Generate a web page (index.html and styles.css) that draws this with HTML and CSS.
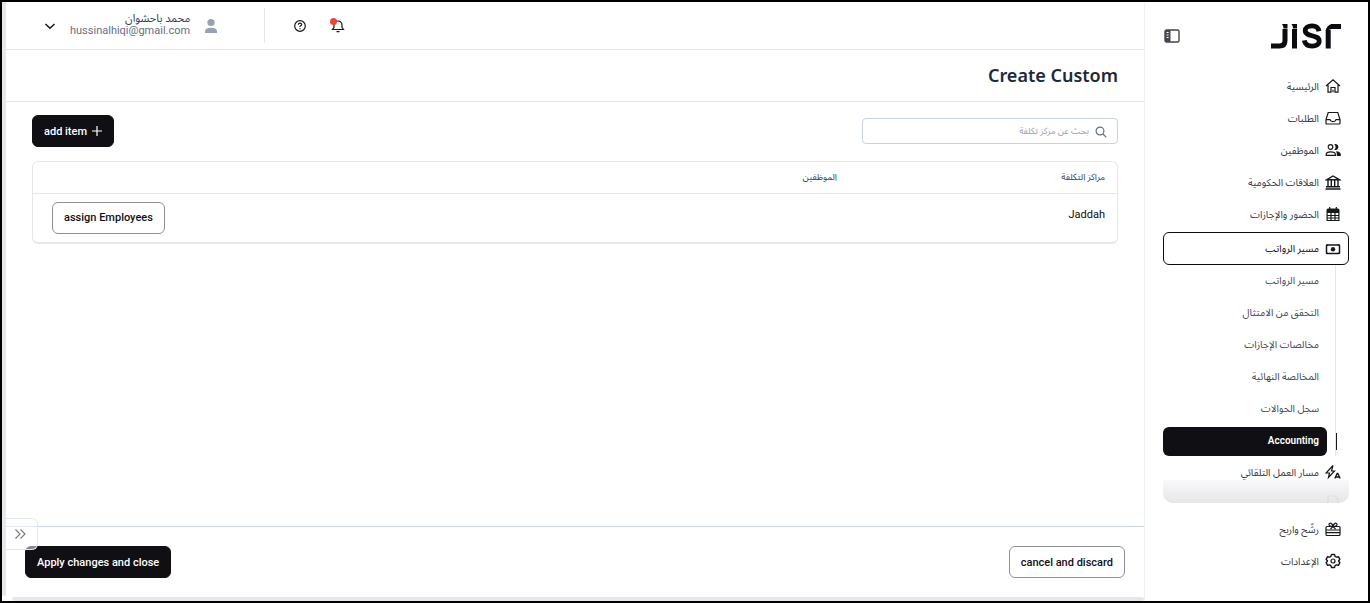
FILE: index.html
```html
<!DOCTYPE html>
<html lang="ar" dir="rtl">
<head>
<meta charset="utf-8">
<meta name="viewport" content="width=device-width, initial-scale=1">
<title>Create Custom</title>
<link rel="stylesheet" href="styles.css">
</head>
<body>
<div class="app">
  <aside class="sidebar">
    <div class="brand">
      <svg class="logo" viewBox="0 0 70 26" role="img" aria-label="Jisr" fill="none" stroke="#0b0b10" stroke-width="5">
        <path d="M0 23h8.500q5.500 0 5.500-5.500V6"/>
        <path d="M11 1h5.500v4.500h-4q0-3-1.500-4.500z M20.500 1h5.500v4.500h-4q0-3-1.500-4.500z" fill="#0b0b10" stroke="none"/>
        <path d="M23.500 6v19.500"/>
        <path d="M48 8.200C47.300 4.500 44.500 2.800 41 2.800c-4.200 0-6.800 1.900-6.800 4.800 0 7 14 3.200 14 10.500 0 3.300-2.900 5-7 5-4.500 0-7.200-1.900-7.900-5.700" stroke-width="4.800"/>
        <path d="M57.200 25.500V7M60 3.500h10"/>
        <path d="M60.500 1v5l-5.800 2q.8-5.500 5.800-7z" fill="#0b0b10" stroke="none"/>
      </svg>
      <button class="icon-button" type="button" aria-label="طي القائمة">
        <svg class="icon-panel" viewBox="0 0 16 14"><rect x="1" y="1" width="14" height="12" rx="1.500" fill="none" stroke="#44474f" stroke-width="1.400"/><path d="M1 1h5.500v12H1z" fill="#44474f"/><path d="M2.600 3.500h2M2.600 6h2M2.600 8.500h2" stroke="#fff"/></svg>
      </button>
    </div>
    <nav class="nav" aria-label="القائمة الرئيسية">
      <a class="nav-item" href="#"><svg class="icon" viewBox="0 0 16 16"><path d="M1 8l7-6.300L15 8M3 6.500v7.700h3V9.500h4v4.700h3V6.500M8 14.200v-2.500"/></svg>الرئيسية</a>
      <a class="nav-item" href="#"><svg class="icon" viewBox="0 0 16 16"><path d="M3.200 2.500h9.600l2.200 7V13q0 1-1 1H2q-1 0-1-1V9.500zM1 9.700h4q.5 2 3 2t3-2h4"/></svg>الطلبات</a>
      <a class="nav-item" href="#"><svg class="icon" viewBox="0 0 16 16"><circle cx="5.500" cy="5" r="2.300"/><path d="M1.200 13.300v-.8q0-2.600 4.600-2.600t4.600 2.600v.8z"/><path class="solid" d="M9.300 2.200a3 3 0 110 5.600 4 4 0 000-5.600zM11 9.300q4.800.4 4.800 3.200V14h-4v-1.500q0-2-.8-3.200z"/></svg>الموظفين</a>
      <a class="nav-item" href="#"><svg class="icon" viewBox="0 0 16 16"><path d="M1.500 5.800L8 2l6.500 3.800zM1 12.800h14M.5 15h15M3 6v6.500M6.300 6v6.500M9.700 6v6.500M13 6v6.500" stroke-width="1.400"/></svg>العلاقات الحكومية</a>
      <a class="nav-item" href="#"><svg class="icon" viewBox="0 0 16 16"><path class="solid" d="M3 2.500h10q1.500 0 1.500 1.500v3h-13V4q0-1.500 1.500-1.500z"/><path d="M4.700 1v3M11.300 1v3M2.100 7v7.500h11.800V7M2.100 9.500h11.800M2.100 12h11.800M6 7v7.500M10 7v7.500"/></svg>الحضور والإجازات</a>
      <a class="nav-item nav-item-open" href="#" aria-expanded="true"><svg class="icon" viewBox="0 0 16 16"><rect x="1.500" y="4" width="13" height="8.500" rx=".8" stroke-width="1.500"/><circle class="solid" cx="8" cy="8.200" r="2.200"/><path class="solid" d="M1 3.500h2.800L1 6.300zM15 3.500h-2.800L15 6.300zM1 13h2.800L1 10.200zM15 13h-2.800l2.800-2.800z"/></svg>مسير الرواتب</a>
      <div class="subnav">
        <a class="sub-item" href="#">مسير الرواتب</a>
        <a class="sub-item" href="#">التحقق من الامتثال</a>
        <a class="sub-item" href="#">مخالصات الإجازات</a>
        <a class="sub-item" href="#">المخالصة النهائية</a>
        <a class="sub-item" href="#">سجل الحوالات</a>
        <a class="sub-item sub-item-current" href="#" aria-current="page">Accounting</a>
      </div>
      <a class="nav-item" href="#"><svg class="icon" viewBox="0 0 16 16"><path d="M8 1.500L1 9h3.500l-1 4.500L9.500 7H6.500z"/><path d="M9.800 14.500l2.400-5h.6l2.400 5M10.700 13h3.600" stroke-width="1.400"/></svg>مسار العمل التلقائي</a>
      <div class="nav-fade" aria-hidden="true"><svg class="icon" viewBox="0 0 16 16"><path d="M3 14V2h7l3 3v9"/></svg></div>
    </nav>
    <nav class="nav-foot" aria-label="روابط إضافية">
      <a class="nav-item" href="#"><svg class="icon" viewBox="0 0 16 16"><path d="M1 8V6.500q0-1 1-1h12q1 0 1 1V8M1 8v5.500q0 1 1 1h12q1 0 1-1V8M1 9h14M1 11.700h14M8 5.500C5 5.500 3.800 4.500 4 3.200 4.500 1.300 7.500 2 8 5.500c.5-3.500 3.500-4.200 4-2.300.2 1.300-1 2.300-4 2.300zm0 0L5.500 8M8 5.500L10.500 8"/></svg>رشّح واربح</a>
      <a class="nav-item" href="#"><svg class="icon" viewBox="0 0 16 16"><path d="M6.500 1.500h3l.6 1.900 1.300.7 2-.4 1.500 2.600L13.500 8l1.400 1.700-1.500 2.600-2-.4-1.300.7-.6 1.900h-3l-.6-1.900-1.300-.7-2 .4-1.500-2.600L2.500 8 1.100 6.300l1.500-2.600 2 .4 1.300-.7z" stroke-linejoin="round" stroke-width="1.400"/><circle cx="8" cy="8" r="2"/></svg>الإعدادات</a>
    </nav>
  </aside>

  <div class="workspace">
    <header class="topbar">
      <button class="icon-button bell" type="button" aria-label="الإشعارات">
        <svg class="icon-top" viewBox="0 0 14 14"><path d="M1.500 10.500h11L11 8.500V6a4 4 0 00-8 0v2.500zM5.500 12.700h3"/></svg>
        <span class="bell-dot"></span>
      </button>
      <button class="icon-button" type="button" aria-label="المساعدة">
        <svg class="icon-top" viewBox="0 0 14 14"><circle cx="7" cy="7" r="5.300"/><path d="M5.300 5.700q.1-1.500 1.700-1.500t1.700 1.300Q8.700 6.500 7 7.200V8M7 9.200v1.100"/></svg>
      </button>
      <div class="account">
        <svg class="avatar" viewBox="0 0 14 16"><circle cx="7" cy="4.500" r="3.600"/><path d="M1 15v-1.500Q1 9.800 7 9.800t6 3.700V15z"/></svg>
        <div class="account-text">
          <span class="account-name">محمد باحشوان</span>
          <span class="account-mail">hussinalhiqi@gmail.com</span>
        </div>
        <button class="icon-button" type="button" aria-label="قائمة الحساب">
          <svg class="icon-chevron" viewBox="0 0 12 12"><path d="M1.500 4L6 8.300 10.500 4"/></svg>
        </button>
      </div>
    </header>
    <div class="titlebar"><h1 class="title">Create Custom</h1></div>
    <main class="content">
      <div class="tools">
        <div class="search">
          <svg class="search-icon" viewBox="0 0 12 12"><circle cx="5" cy="5" r="3.900"/><path d="M8 8l3.300 3.300"/></svg>
          <input class="search-input" type="search" aria-label="بحث عن مركز تكلفة" placeholder="بحث عن مركز تكلفة">
        </div>
        <button class="button button-dark" type="button"><svg class="icon-plus" viewBox="0 0 10 10"><path d="M5 0v10M0 5h10"/></svg>add item</button>
      </div>
      <div class="table-card">
        <table class="centers">
          <thead><tr><th class="col-center" scope="col">مراكز التكلفة</th><th scope="col">الموظفين</th><td></td></tr></thead>
          <tbody><tr><td class="center-name">Jaddah</td><td></td><td class="cell-action"><button class="button button-light" type="button">assign Employees</button></td></tr></tbody>
        </table>
      </div>
    </main>
    <footer class="actions">
      <button class="button button-light" type="button">cancel and discard</button>
      <button class="button button-dark" type="button">Apply changes and close</button>
    </footer>
    <div class="scroll-x"></div>
  </div>
  <div class="scroll-y"></div>
  <button class="expander" type="button" aria-label="توسيع">
    <svg class="icon-expand" viewBox="0 0 12 12"><path d="M1.500 1.500L6 6l-4.500 4.500M6.500 1.500L11 6l-4.500 4.500"/></svg>
  </button>
</div>
</body>
</html>
```

FILE: styles.css
```css
* { box-sizing: border-box; }
body { margin: 0; font-family: Roboto, "Noto Sans Arabic", "DejaVu Sans", sans-serif; color: #0b0b10; background: #fff; }
button, input { font-family: inherit; }
a { color: inherit; text-decoration: none; }

.app { position: relative; display: flex; min-height: 100vh; border: 2px solid #000; }

/* Sidebar */
.sidebar { flex: none; display: flex; flex-direction: column; width: 224px; padding: 0 19px 0 18px; border-left: 1px solid #f1f2f5; }
.brand { display: flex; align-items: center; justify-content: space-between; height: 68px; padding: 0 8px 0 1px; }
.logo { width: 70px; height: 26px; }
.icon-button { display: flex; padding: 0; border: 0; background: none; }
.icon-panel { width: 16px; height: 14px; }
.nav { display: flex; flex-direction: column; }
.nav-item { display: flex; align-items: center; gap: 6px; height: 32px; padding: 0 8px; font-size: 10px; color: #33363f; }
.nav-item-open { height: 33px; margin-top: 2px; padding: 0 7px; border: 1px solid #0b0b10; border-radius: 6px; color: #0b0b10; }
.icon { flex: none; width: 16px; height: 16px; fill: none; stroke: #16181d; stroke-width: 1.2; }
.solid { fill: #16181d; stroke: none; }
.subnav { display: flex; flex-direction: column; margin-right: 13px; padding-right: 8px; border-right: 1px solid #e5e7eb; }
.sub-item { display: flex; align-items: center; height: 32px; padding: 0 8px 2px; font-size: 10px; color: #44474f; }
.sub-item-current { position: relative; height: 29px; margin-top: 2px; border-radius: 6px; font-weight: 600; color: #fff; background: #101014; }
.sub-item-current::after { content: ""; position: absolute; right: -10px; top: 6px; width: 1px; height: 17px; background: #16181d; }
.nav-fade { z-index: 1; height: 23px; margin-top: -8px; padding: 14px 8px 0; overflow: hidden; border-radius: 0 0 10px 10px; background: linear-gradient(rgba(245, 245, 248, .6), #e6e6e7); }
.nav-fade .icon { opacity: .06; }
.nav-foot { margin-top: 10px; }

/* Top bar */
.workspace { flex: 1; display: flex; flex-direction: column; min-width: 0; }
.topbar { flex: none; display: flex; align-items: center; justify-content: flex-end; gap: 24px; height: 48px; padding-left: 38px; border-bottom: 1px solid #e5e7eb; }
.icon-top { width: 14px; height: 14px; fill: none; stroke: #16181d; stroke-width: 1.2; }
.bell { position: relative; }
.bell-dot { position: absolute; top: -1px; left: -1px; width: 7px; height: 7px; border-radius: 50%; background: #f04438; }
.account { display: flex; align-items: center; gap: 14px; height: 35px; margin-right: 4px; padding-right: 46px; border-right: 1px solid #e5e7eb; }
.avatar { width: 14px; height: 16px; fill: #98a2b3; }
.account-text { display: flex; flex-direction: column; padding-bottom: 2px; line-height: 12px; }
.account-name { font-size: 11px; color: #344054; }
.account-mail { font-size: 11px; color: #667085; }
.icon-chevron { width: 12px; height: 12px; fill: none; stroke: #16181d; stroke-width: 1.5; }
.titlebar { flex: none; display: flex; align-items: center; height: 52px; padding: 0 26px 2px; border-bottom: 1px solid #e5e7eb; }
.title { margin: 0; font-family: "Noto Sans", sans-serif; font-size: 18px; font-weight: 600; color: #1d2939; }

/* Content */
.content { flex: 1; padding: 13px 26px; }
.tools { display: flex; align-items: center; justify-content: space-between; }
.search { position: relative; width: 256px; }
.search-icon { position: absolute; top: 8px; right: 11px; width: 12px; height: 12px; fill: none; stroke: #667085; stroke-width: 1.2; }
.search-input { display: block; width: 100%; height: 26px; padding: 0 28px 0 8px; border: 1px solid #cbd2e0; border-radius: 4px; font-size: 9px; background: #fff; }
.search-input::placeholder { color: #98a2b3; }
.button { display: inline-flex; align-items: center; justify-content: center; gap: 5px; height: 32px; padding: 0 11px; border-radius: 6px; font-size: 11px; font-weight: 500; white-space: nowrap; }
.button-dark { border: 1px solid #101014; color: #fff; background: #101014; }
.button-light { border: 1px solid #9090a0; color: #101014; background: #fff; }
.icon-plus { width: 10px; height: 10px; stroke: #fff; stroke-width: 1.2; }
.table-card { margin-top: 14px; border: 1px solid #e5e7eb; border-bottom-width: 2px; border-radius: 6px; }
.centers { width: 100%; border-collapse: collapse; }
.centers th { height: 31px; padding: 0 12px; font-size: 9px; font-weight: 400; text-align: right; color: #344054; }
.centers thead { border-bottom: 1px solid #e5e7eb; }
.col-center { width: 268px; }
.centers td { padding: 0 12px; }
.centers .center-name { padding-bottom: 7px; font-size: 11px; }
.centers .cell-action { height: 49px; padding: 0 19px; text-align: left; }

/* Footer */
.actions { flex: none; display: flex; align-items: flex-start; justify-content: space-between; height: 71px; padding: 19px 19px 0; border-top: 1px solid #cbd5e1; }
.scroll-x { flex: none; height: 4px; margin-left: 6px; border-radius: 2px; background: #e5e7eb; }
.scroll-y { flex: none; width: 4px; margin-bottom: 5px; border-radius: 0 0 2px 2px; background: #e5e7eb; }
.expander { position: absolute; left: 4px; bottom: 51px; display: flex; align-items: center; justify-content: center; width: 32px; height: 32px; padding: 0 3px 0 0; border: 1px solid #e5e7eb; border-left: 0; border-radius: 0 6px 6px 0; background: rgba(255, 255, 255, .5); }
.icon-expand { width: 12px; height: 12px; fill: none; stroke: #777; stroke-width: 1.1; }
```
